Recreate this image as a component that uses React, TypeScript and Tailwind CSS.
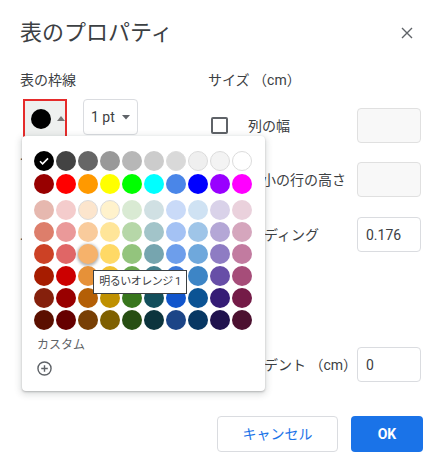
import React from 'react';

const ROWS: string[][] = [
  ['#000000', '#434343', '#666666', '#999999', '#b7b7b7', '#cccccc', '#d9d9d9', '#efefef', '#f3f3f3', '#ffffff'],
  ['#980000', '#ff0000', '#ff9900', '#ffff00', '#00ff00', '#00ffff', '#4a86e8', '#0000ff', '#9900ff', '#ff00ff'],
  ['#e6b8af', '#f4cccc', '#fce5cd', '#fff2cc', '#d9ead3', '#d0e0e3', '#c9daf8', '#cfe2f3', '#d9d2e9', '#ead1dc'],
  ['#dd7e6b', '#ea9999', '#f9cb9c', '#ffe599', '#b6d7a8', '#a2c4c9', '#a4c2f4', '#9fc5e8', '#b4a7d6', '#d5a6bd'],
  ['#cc4125', '#e06666', '#f6b26b', '#ffd966', '#93c47d', '#76a5af', '#6d9eeb', '#6fa8dc', '#8e7cc3', '#c27ba0'],
  ['#a61c00', '#cc0000', '#e69138', '#f1c232', '#6aa84f', '#45818e', '#3c78d8', '#3d85c6', '#674ea7', '#a64d79'],
  ['#85200c', '#990000', '#b45f06', '#bf9000', '#38761d', '#134f5c', '#1155cc', '#0b5394', '#351c75', '#741b47'],
  ['#5b0f00', '#660000', '#783f04', '#7f6000', '#274e13', '#0c343d', '#1c4587', '#073763', '#20124d', '#4c1130'],
];

const LIGHT = ['#efefef', '#f3f3f3', '#ffffff', '#d9d9d9', '#fce5cd', '#fff2cc'];

function Swatch({ color, checked, hovered }: { color: string; checked?: boolean; hovered?: boolean }) {
  const light = LIGHT.includes(color);
  return (
    <div
      className={`w-5 h-5 rounded-full flex items-center justify-center ${light ? 'border border-[#dcdcdc]' : ''} ${
        hovered ? 'shadow-[0_1px_3px_1px_rgba(0,0,0,0.3)]' : ''
      }`}
      style={{ backgroundColor: color }}
    >
      {checked && (
        <svg width="12" height="12" viewBox="0 0 12 12">
          <path d="M2 6.3l2.6 2.6L10 3.4" fill="none" stroke="#fff" strokeWidth="1.6" />
        </svg>
      )}
    </div>
  );
}

function Palette() {
  return (
    <div className="absolute left-[22px] top-[136px] w-[243px] h-[255px] bg-white rounded-[4px] shadow-[0_2px_6px_2px_rgba(60,64,67,0.15),0_1px_2px_rgba(60,64,67,0.3)] pl-3 pt-[15px]">
      <div className="flex flex-col">
        {ROWS.map((row, r) => (
          <div
            key={r}
            className={`flex gap-[2px] ${r === 0 ? 'mb-[3px]' : r === 1 ? 'mb-[6px]' : 'mb-[2px]'}`}
          >
            {row.map((c, i) => (
              <Swatch key={i} color={c} checked={r === 0 && i === 0} hovered={r === 4 && i === 2} />
            ))}
          </div>
        ))}
      </div>
      <div className="mt-[5px] pl-[3px] text-[12px] leading-4 text-[#5f6368]">カスタム</div>
      <div className="mt-[8px] pl-[3px]">
        <svg width="15" height="15" viewBox="0 0 16 16">
          <circle cx="8" cy="8" r="7" fill="none" stroke="#5f6368" strokeWidth="1.5" />
          <path d="M8 4.5v7M4.5 8h7" stroke="#5f6368" strokeWidth="1.5" />
        </svg>
      </div>
    </div>
  );
}

export default function App() {
  return (
    <div className="relative w-[442px] h-[475px] bg-white overflow-hidden font-['Roboto','Noto_Sans_CJK_JP',sans-serif] text-[#3c4043]">
      {/* header */}
      <div className="flex items-center justify-between pl-5 pr-[29px] pt-[19px]">
        <h1 className="text-[22px] leading-7 font-normal text-[#3c4043]">表のプロパティ</h1>
        <svg width="12" height="12" viewBox="0 0 12 12">
          <path d="M1 1l10 10M11 1L1 11" stroke="#5f6368" strokeWidth="1.4" />
        </svg>
      </div>

      {/* body */}
      <div className="flex mt-[23px] pl-5">
        <div className="w-[188px] flex flex-col">
          <div className="text-sm leading-5">表の枠線</div>
          <div className="flex items-start gap-4 mt-[9px] ml-[3px]">
            <div className="w-[44px] h-[39px] border-2 border-[#e52b2b] bg-[#eef0ef] flex items-center pl-[6px] gap-[6px]">
              <div className="w-5 h-5 rounded-full bg-black" />
              <svg width="8" height="5" viewBox="0 0 8 5">
                <path d="M0 5L4 0l4 5z" fill="#777" />
              </svg>
            </div>
            <div className="w-[55px] h-[36px] border border-[#dadce0] rounded-[4px] flex items-center pl-[7px] gap-[7px] text-sm">
              <span>1 pt</span>
              <svg width="8" height="5" viewBox="0 0 8 5">
                <path d="M0 0h8L4 4.5z" fill="#5f6368" />
              </svg>
            </div>
          </div>
          <div className="text-sm leading-5 mt-3">セルの背景色</div>
          <div className="text-sm leading-5 mt-[60px]">セルの縦方向の配置</div>
        </div>

        <div className="w-[213px] flex flex-col">
          <div className="text-sm leading-5">サイズ （cm）</div>
          <div className="flex items-center h-[35px] mt-[18px]">
            <div className="ml-[3px] w-[17px] h-[17px] border-2 border-[#5f6368] rounded-[2px]" />
            <span className="ml-5 text-sm">列の幅</span>
            <div className="ml-auto w-16 h-[35px] bg-[#f8f8f8] border border-[#e0e0e0] rounded-[4px]" />
          </div>
          <div className="flex items-center h-[35px] mt-[19px]">
            <div className="ml-[3px] w-[17px] h-[17px] border-2 border-[#5f6368] rounded-[2px]" />
            <span className="ml-5 text-sm">最小の行の高さ</span>
            <div className="ml-auto w-16 h-[35px] bg-[#f8f8f8] border border-[#e0e0e0] rounded-[4px]" />
          </div>
          <div className="flex items-center h-[35px] mt-5">
            <span className="text-sm">セルのパディング</span>
            <div className="ml-auto w-16 h-[35px] border border-[#dadce0] rounded-[4px] flex items-center pl-2 text-sm">
              0.176
            </div>
          </div>
          <div className="flex items-center h-[35px] mt-[95px]">
            <span className="text-sm">表のインデント （cm）</span>
            <div className="ml-auto w-16 h-[35px] border border-[#dadce0] rounded-[4px] flex items-center pl-2 text-sm">
              0
            </div>
          </div>
        </div>
      </div>

      {/* footer */}
      <div className="flex justify-end gap-[13px] pr-[19px] mt-[34px]">
        <button className="w-[121px] h-9 border border-[#dadce0] rounded-[4px] bg-white text-sm text-[#1a73e8]">
          キャンセル
        </button>
        <button className="w-[72px] h-9 rounded-[4px] bg-[#1a73e8] text-sm font-bold text-white">OK</button>
      </div>

      <Palette />

      <div className="absolute left-[93px] top-[270px] w-[94px] h-[24px] bg-white border border-[#3c4043] flex items-center justify-center text-[11px] text-[#3c4043] tracking-[-0.5px]">
        明るいオレンジ 1
      </div>
    </div>
  );
}
